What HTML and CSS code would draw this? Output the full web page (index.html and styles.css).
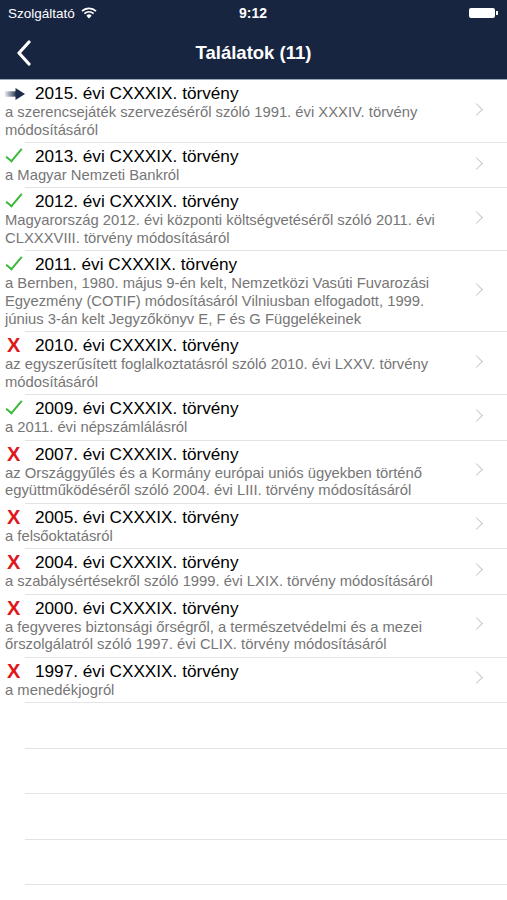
FILE: index.html
```html
<!DOCTYPE html>
<html lang="hu">
<head>
    <meta charset="UTF-8">
    <meta name="viewport" content="width=device-width, initial-scale=1.0">
    <title>Találatok</title>
    <link rel="stylesheet" href="styles.css">
</head>
<body>
    <header class="top">
        <div class="status">
            <div class="carrier">
                Szolgáltató
                <svg class="wifi" width="16" height="12" viewBox="0 0 16 12">
                    <path d="M1 4.2 A10 10 0 0 1 15 4.2" fill="none" stroke="#fff" stroke-width="1.7"/>
                    <path d="M3.4 6.6 A6.6 6.6 0 0 1 12.6 6.6" fill="none" stroke="#fff" stroke-width="1.7"/>
                    <path d="M8 11.5 L5.4 8.7 A3.6 3.6 0 0 1 10.6 8.7 Z" fill="#fff"/>
                </svg>
            </div>
            <div class="clock">9:12</div>
            <div class="battery"><span class="cell"></span><span class="knob"></span></div>
        </div>
        <nav class="navbar">
            <svg class="back" width="16" height="26" viewBox="0 0 16 26">
                <path d="M13 2 L3 13 L13 24" fill="none" stroke="#fff" stroke-width="3.2" stroke-linecap="round" stroke-linejoin="round"/>
            </svg>
            <h1>Találatok (11)</h1>
        </nav>
    </header>

    <ul class="results">
        <li class="row">
            <div class="text">
                <div class="title"><span class="icon"><svg width="20" height="12" viewBox="0 0 20 12"><defs><linearGradient id="tail" x1="0" x2="1"><stop offset="0" stop-color="#1d2b4a" stop-opacity="0.1"/><stop offset="1" stop-color="#1d2b4a"/></linearGradient></defs><rect x="0" y="3.3" width="12" height="5.4" fill="url(#tail)"/><path d="M10.5 0 L20 6 L10.5 12 Z" fill="#1d2b4a"/></svg></span>2015. évi CXXXIX. törvény</div>
                <div class="sub">a szerencsejáték szervezéséről szóló 1991. évi XXXIV. törvény módosításáról</div>
            </div>
            <span class="chevron"></span>
        </li>
        <li class="row">
            <div class="text">
                <div class="title"><span class="icon check"></span>2013. évi CXXXIX. törvény</div>
                <div class="sub">a Magyar Nemzeti Bankról</div>
            </div>
            <span class="chevron"></span>
        </li>
        <li class="row">
            <div class="text">
                <div class="title"><span class="icon check"></span>2012. évi CXXXIX. törvény</div>
                <div class="sub">Magyarország 2012. évi központi költségvetéséről szóló 2011. évi CLXXXVIII. törvény módosításáról</div>
            </div>
            <span class="chevron"></span>
        </li>
        <li class="row">
            <div class="text">
                <div class="title"><span class="icon check"></span>2011. évi CXXXIX. törvény</div>
                <div class="sub">a Bernben, 1980. május 9-én kelt, Nemzetközi Vasúti Fuvarozási Egyezmény (COTIF) módosításáról Vilniusban elfogadott, 1999. június 3-án kelt Jegyzőkönyv E, F és G Függelékeinek</div>
            </div>
            <span class="chevron"></span>
        </li>
        <li class="row">
            <div class="text">
                <div class="title"><span class="icon cross">X</span>2010. évi CXXXIX. törvény</div>
                <div class="sub">az egyszerűsített foglalkoztatásról szóló 2010. évi LXXV. törvény módosításáról</div>
            </div>
            <span class="chevron"></span>
        </li>
        <li class="row">
            <div class="text">
                <div class="title"><span class="icon check"></span>2009. évi CXXXIX. törvény</div>
                <div class="sub">a 2011. évi népszámlálásról</div>
            </div>
            <span class="chevron"></span>
        </li>
        <li class="row">
            <div class="text">
                <div class="title"><span class="icon cross">X</span>2007. évi CXXXIX. törvény</div>
                <div class="sub">az Országgyűlés és a Kormány európai uniós ügyekben történő együttműködéséről szóló 2004. évi LIII. törvény módosításáról</div>
            </div>
            <span class="chevron"></span>
        </li>
        <li class="row">
            <div class="text">
                <div class="title"><span class="icon cross">X</span>2005. évi CXXXIX. törvény</div>
                <div class="sub">a felsőoktatásról</div>
            </div>
            <span class="chevron"></span>
        </li>
        <li class="row">
            <div class="text">
                <div class="title"><span class="icon cross">X</span>2004. évi CXXXIX. törvény</div>
                <div class="sub">a szabálysértésekről szóló 1999. évi LXIX. törvény módosításáról</div>
            </div>
            <span class="chevron"></span>
        </li>
        <li class="row">
            <div class="text">
                <div class="title"><span class="icon cross">X</span>2000. évi CXXXIX. törvény</div>
                <div class="sub">a fegyveres biztonsági őrségről, a természetvédelmi és a mezei őrszolgálatról szóló 1997. évi CLIX. törvény módosításáról</div>
            </div>
            <span class="chevron"></span>
        </li>
        <li class="row">
            <div class="text">
                <div class="title"><span class="icon cross">X</span>1997. évi CXXXIX. törvény</div>
                <div class="sub">a menedékjogról</div>
            </div>
            <span class="chevron"></span>
        </li>
        <li class="row empty"></li>
        <li class="row empty"></li>
        <li class="row empty"></li>
        <li class="row empty"></li>
    </ul>
</body>
</html>
```

FILE: styles.css
```css
body {
    margin: 0;
    font-family: "Liberation Sans", Arial, sans-serif;
    background: #fff;
    color: #000;
}

.top {
    background: #172540;
    color: #fff;
    border-bottom: 1px solid #9aa6b6;
}

.status {
    height: 26px;
    display: grid;
    grid-template-columns: 1fr auto 1fr;
    align-items: center;
    padding: 0 9px 0 8px;
    font-size: 13.5px;
}

.carrier {
    display: flex;
    align-items: center;
    gap: 6px;
}

.clock {
    font-weight: bold;
    font-size: 14px;
}

.battery {
    justify-self: end;
    display: flex;
    align-items: center;
}

.battery .cell {
    width: 26px;
    height: 10px;
    background: #fff;
    border-radius: 2px;
}

.battery .knob {
    width: 2px;
    height: 4px;
    background: #fff;
    margin-left: 1px;
}

.navbar {
    height: 53px;
    display: grid;
    grid-template-columns: 60px 1fr 60px;
    align-items: center;
}

.navbar .back {
    margin-left: 16px;
}

.navbar h1 {
    margin: 0;
    text-align: center;
    font-size: 18.5px;
    font-weight: bold;
}

.results {
    list-style: none;
    margin: 0;
    padding: 0;
}

.row {
    display: flex;
    align-items: center;
    min-height: 45.5px;
    box-sizing: border-box;
    padding: 3px 0 3.8px 5px;
    background: linear-gradient(#e3e3e5, #e3e3e5) no-repeat 25px 100% / calc(100% - 25px) 1px;
}

.text {
    flex: 1;
}

.title {
    display: flex;
    align-items: center;
    font-size: 17.2px;
    line-height: 21px;
}

.icon {
    width: 20px;
    margin-right: 10px;
    display: flex;
    align-items: center;
    justify-content: flex-start;
    box-sizing: border-box;
}

.check::before {
    content: "";
    width: 6px;
    height: 15px;
    border: solid #3bb83b;
    border-width: 0 2.6px 2.6px 0;
    transform: translate(5px, -3px) rotate(40deg);
}

.cross {
    color: #e0161b;
    font-weight: bold;
    font-size: 20px;
    padding-left: 2px;
}

.sub {
    font-size: 14.8px;
    line-height: 17.6px;
    color: #767676;
}

.chevron {
    width: 8px;
    height: 8px;
    border: solid #c7c7cc;
    border-width: 1.6px 1.6px 0 0;
    transform: rotate(45deg);
    margin: 0 26px 4px 11px;
}
```
